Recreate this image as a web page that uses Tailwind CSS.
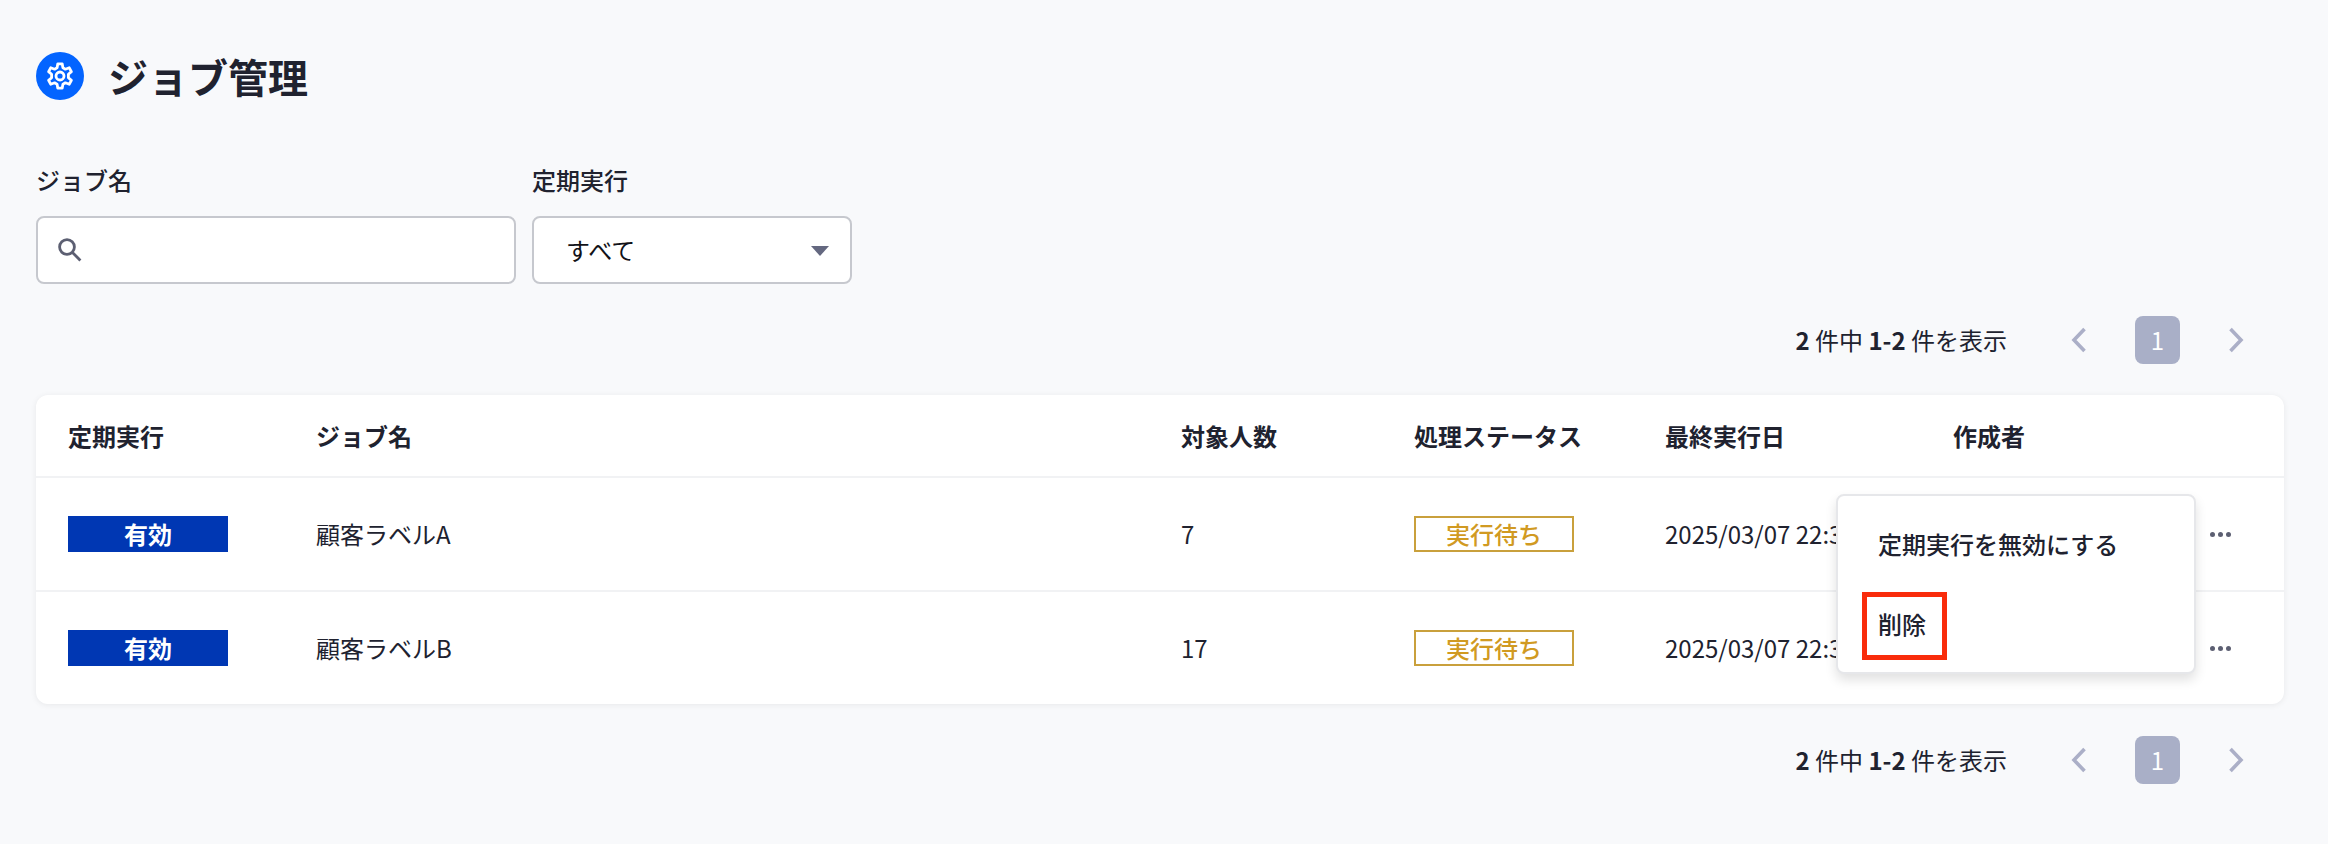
<!DOCTYPE html>
<html lang="ja">
  <head>
    <meta charset="UTF-8" />
    <meta name="viewport" content="width=device-width, initial-scale=1.0" />
    <title>ジョブ管理</title>
    <script src="https://cdn.jsdelivr.net/npm/@tailwindcss/browser@4"></script>
  </head>
  <body
    class="min-h-screen bg-[#f8f9fb] font-['Noto_Sans_CJK_JP',sans-serif] text-2xl/9 text-[#20222f]"
  >
    <main class="pt-13 pr-11 pb-15 pl-9">
      <!-- Header -->
      <header class="flex items-center gap-6">
        <span
          class="flex size-12 items-center justify-center rounded-full bg-[#0364ff] text-white"
        >
          <svg class="size-8" viewBox="0 0 32 32" fill="none" stroke="currentColor" stroke-width="2.8" stroke-linejoin="round">
            <path d="M13.800 3.800h4.400l.7 4 2.500 1.400 3.800-1.400 2.200 3.800-3 2.600v3.600l3 2.600-2.200 3.800-3.800-1.400-2.500 1.400-.7 4h-4.400l-.7-4-2.500-1.400-3.800 1.400-2.200-3.800 3-2.600v-3.600l-3-2.600 2.200-3.800 3.800 1.400 2.500-1.400z" />
            <circle cx="16" cy="16" r="4" />
          </svg>
        </span>
        <h1 class="text-[40px]/12 font-bold">ジョブ管理</h1>
      </header>

      <!-- Filter -->
      <form class="mt-[62px] flex gap-4">
        <div class="w-120">
          <label for="job-name" class="mb-[18px] block font-medium">ジョブ名</label>
          <div class="relative">
            <svg class="absolute top-5 left-5 size-7 text-[#5c5f72]" viewBox="0 0 28 28" fill="none" stroke="currentColor" stroke-width="2.8">
              <circle cx="11" cy="11" r="7.400" />
              <path d="M16.400 16.400l8 8" />
            </svg>
            <input
              id="job-name"
              type="text"
              class="block h-17 w-full rounded-lg border-2 border-[#c6c8ce] bg-white pr-4 pl-14 outline-none"
            />
          </div>
        </div>
        <div class="w-80">
          <label for="schedule" class="mb-[18px] block font-medium">定期実行</label>
          <div class="relative">
            <select
              id="schedule"
              class="block h-17 w-full appearance-none rounded-lg border-2 border-[#c6c8ce] bg-white pr-14 pl-8 text-[#111218] outline-none"
            >
              <option>すべて</option>
              <option>有効</option>
              <option>無効</option>
            </select>
            <svg class="pointer-events-none absolute top-[30px] right-[23px] h-[10px] w-[18px]" viewBox="0 0 18 10" fill="#646880">
              <path d="M0 0h18L9 10z" />
            </svg>
          </div>
        </div>
      </form>

      <!-- Pagination -->
      <nav class="mt-8 flex items-center justify-end pr-[26px]" aria-label="ページ送り（上）">
        <p class="mr-[50px]"><b>2</b> 件中 <b>1-2</b> 件を表示</p>
        <button type="button" class="flex size-11 items-center justify-center text-[#abafc7]" aria-label="前へ">
          <svg class="h-7 w-5" viewBox="0 0 20 28" fill="none" stroke="currentColor" stroke-width="3.600">
            <path d="M15.500 3L5 14l10.500 11" />
          </svg>
        </button>
        <button type="button" class="mx-[34px] h-12 w-[45px] rounded-lg bg-[#a9afc7] text-white">1</button>
        <button type="button" class="flex size-11 items-center justify-center text-[#abafc7]" aria-label="次へ">
          <svg class="h-7 w-5" viewBox="0 0 20 28" fill="none" stroke="currentColor" stroke-width="3.600">
            <path d="M4.500 3L15 14 4.500 25" />
          </svg>
        </button>
      </nav>

      <!-- Table -->
      <section class="mt-[31px] rounded-xl bg-white shadow-[0_1px_6px_rgba(0,0,0,0.07)]">
        <table class="w-full table-fixed text-left">
          <colgroup>
            <col class="w-62" />
            <col />
            <col class="w-[233px]" />
            <col class="w-[251px]" />
            <col class="w-72" />
            <col class="w-[235px]" />
            <col class="w-32" />
          </colgroup>
          <thead>
            <tr class="h-[82px] border-b-2 border-[#f1f2f4]">
              <th class="pl-8 font-bold">定期実行</th>
              <th class="pl-8 font-bold">ジョブ名</th>
              <th class="pl-8 font-bold">対象人数</th>
              <th class="pl-8 font-bold">処理ステータス</th>
              <th class="pl-8 font-bold">最終実行日</th>
              <th class="pl-8 font-bold">作成者</th>
              <th></th>
            </tr>
          </thead>
          <tbody>
            <tr class="h-[114px] border-b-2 border-[#f1f2f4]">
              <td class="pl-8">
                <span class="block h-9 w-40 bg-[#0037b3] text-center font-bold text-white">有効</span>
              </td>
              <td class="pl-8">顧客ラベルA</td>
              <td class="pl-8">7</td>
              <td class="pl-8">
                <span class="block h-9 w-40 border-2 border-[#c9a03c] text-center leading-8 font-medium text-[#d19a22]">実行待ち</span>
              </td>
              <td class="pl-8 whitespace-nowrap">2025/03/07 22:30</td>
              <td></td>
              <td>
                <div class="relative mx-auto size-12">
                  <button type="button" class="flex size-12 items-center justify-center gap-[3px]" aria-label="メニュー" aria-expanded="true">
                    <span class="size-[5px] rounded-full bg-[#5c5f72]"></span>
                    <span class="size-[5px] rounded-full bg-[#5c5f72]"></span>
                    <span class="size-[5px] rounded-full bg-[#5c5f72]"></span>
                  </button>
                  <!-- Row menu -->
                  <div
                    class="absolute -top-4 right-full z-10 w-90 rounded-lg border-2 border-[#e6e7ea] bg-white py-2 shadow-[0_6px_12px_rgba(0,0,0,0.12)]"
                  >
                    <button type="button" class="block h-20 w-full pl-10 text-left font-medium">定期実行を無効にする</button>
                    <button type="button" class="relative block h-20 w-full pl-10 text-left font-medium">
                      削除
                      <span class="absolute top-2 left-6 h-17 w-[85px] border-5 border-[#f92c0b]"></span>
                    </button>
                  </div>
                </div>
              </td>
            </tr>
            <tr class="h-[113px]">
              <td class="pl-8">
                <span class="block h-9 w-40 bg-[#0037b3] text-center font-bold text-white">有効</span>
              </td>
              <td class="pl-8">顧客ラベルB</td>
              <td class="pl-8">17</td>
              <td class="pl-8">
                <span class="block h-9 w-40 border-2 border-[#c9a03c] text-center leading-8 font-medium text-[#d19a22]">実行待ち</span>
              </td>
              <td class="pl-8 whitespace-nowrap">2025/03/07 22:30</td>
              <td></td>
              <td>
                <button type="button" class="mx-auto flex size-12 items-center justify-center gap-[3px]" aria-label="メニュー">
                  <span class="size-[5px] rounded-full bg-[#5c5f72]"></span>
                  <span class="size-[5px] rounded-full bg-[#5c5f72]"></span>
                  <span class="size-[5px] rounded-full bg-[#5c5f72]"></span>
                </button>
              </td>
            </tr>
          </tbody>
        </table>
      </section>

      <!-- Pagination -->
      <nav class="mt-8 flex items-center justify-end pr-[26px]" aria-label="ページ送り（下）">
        <p class="mr-[50px]"><b>2</b> 件中 <b>1-2</b> 件を表示</p>
        <button type="button" class="flex size-11 items-center justify-center text-[#abafc7]" aria-label="前へ">
          <svg class="h-7 w-5" viewBox="0 0 20 28" fill="none" stroke="currentColor" stroke-width="3.600">
            <path d="M15.500 3L5 14l10.500 11" />
          </svg>
        </button>
        <button type="button" class="mx-[34px] h-12 w-[45px] rounded-lg bg-[#a9afc7] text-white">1</button>
        <button type="button" class="flex size-11 items-center justify-center text-[#abafc7]" aria-label="次へ">
          <svg class="h-7 w-5" viewBox="0 0 20 28" fill="none" stroke="currentColor" stroke-width="3.600">
            <path d="M4.500 3L15 14 4.500 25" />
          </svg>
        </button>
      </nav>
    </main>
  </body>
</html>
